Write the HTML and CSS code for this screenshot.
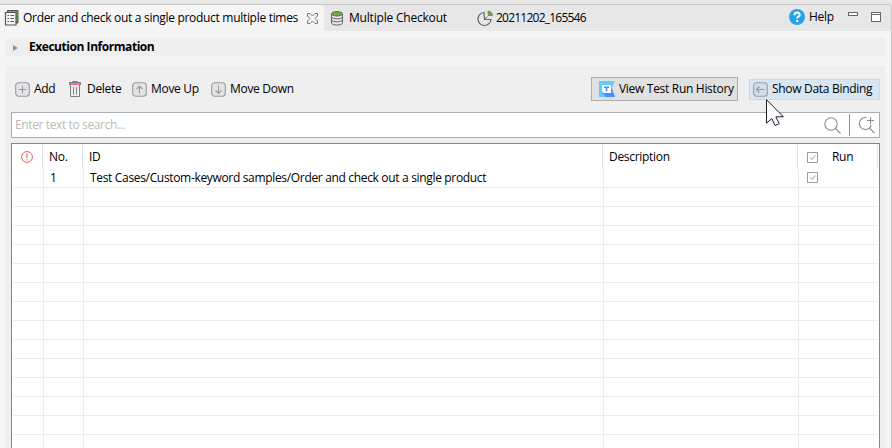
FILE: index.html
```html
<!DOCTYPE html>
<html lang="en">
<head>
<meta charset="utf-8">
<title>Test Suite Collection</title>
<link rel="stylesheet" href="styles.css">
</head>
<body>
<div class="editor">
  <header class="tabs">
    <div class="tab active">
      <svg class="ic" width="16" height="18" viewBox="0 0 16 18" fill="none"><path d="M3.500 3V1.500h10.500v12.500H12" fill="#6cae45" stroke="#555"/><path d="M1.500 3.500h10.500v12.500h-10.500z" fill="#f5f5f5" stroke="#555" stroke-width="1.200"/><path d="M3.500 6.500h1.500m1.500 0h3.500M3.500 9.500h1.500m1.500 0h3.500M3.500 12.500h1.500m1.500 0h3.500" stroke="#555"/></svg>
      <span class="t t-order">Order and check out a single product multiple times</span>
      <svg class="close" width="11" height="11" viewBox="0 0 11 11" fill="none" stroke="#777"><path d="M.5.5h2.500L5.500 3 8 .5h2.500V3L8 5.500 10.500 8v2.500H8L5.500 8 3 10.500H.5V8L3 5.500.5 3z"/></svg>
    </div>
    <div class="tab second">
      <svg class="ic" width="12" height="15" viewBox="0 0 12 15" fill="none" stroke="#666"><path d="M.5 3v8.800c0 3 11 3 11 0V3"/><path d="M.5 5.800c0 2.700 11 2.700 11 0M.5 8.800c0 2.700 11 2.700 11 0"/><ellipse cx="6" cy="2.800" rx="5.500" ry="2.200" fill="#6cae45"/></svg>
      <span class="t t-multi">Multiple Checkout</span>
    </div>
    <div class="tab third">
      <svg class="ic" width="16" height="17" viewBox="0 0 16 17" fill="none"><path d="M7 2.500A6.500 6.500 0 1 0 14 9.500H7.500z" stroke="#666" stroke-width="1.200"/><path d="M7.500 9.500l3-3" stroke="#666"/><path d="M11 1v4.500h4.500A4.500 4.500 0 0 0 11 1z" fill="#6cae45" stroke="#667" stroke-width=".6"/></svg>
      <span class="t t-date">20211202_165546</span>
    </div>
    <div class="tools">
      <svg width="16" height="16" viewBox="0 0 16 16" fill="none"><circle cx="8" cy="8" r="8" fill="#25a3eb"/><path d="M5.500 6.200C5.500 2.500 10.700 2.800 10.700 5.700 10.700 7.600 8.200 7.500 8.200 9.500" stroke="#fff" stroke-width="2"/><path d="M7.100 11h2.200v2H7.100z" fill="#fff"/></svg>
      <span class="t t-help">Help</span>
      <i class="min"></i><i class="max"></i>
    </div>
  </header>

  <section class="execution"><svg width="5" height="6" viewBox="0 0 5 6"><path d="M0 0l5 3-5 3z" fill="#8c9096"/></svg><b class="t t-exec">Execution Information</b></section>

  <main class="panel">
    <div class="toolbar">
      <svg class="square" viewBox="0 0 15 15"><rect x=".7" y=".7" width="13.600" height="13.600" rx="3"/><path d="M3.500 7.500h8M7.500 3.500v8"/></svg>
      <span class="t t-add">Add</span>
      <svg class="bin" width="12" height="16" viewBox="0 0 12 16" fill="none" stroke="#7d8088"><path d="M1.500 4v11.500h9V4M4.500 6v7.500M7.500 6v7.500"/><path d="M3.500 1.500v-1h5v1"/><path d="M1 2h10v2H1z" fill="#fa7482" stroke="none"/><path d="M0 1.500h12M.5 1.500v2.500M11.500 1.500v2.500"/></svg>
      <span class="t t-del">Delete</span>
      <svg class="square" viewBox="0 0 15 15"><rect x=".7" y=".7" width="13.600" height="13.600" rx="3"/><path d="M7.500 11.500V4M4.500 7l3-3 3 3"/></svg>
      <span class="t t-up">Move Up</span>
      <svg class="square" viewBox="0 0 15 15"><rect x=".7" y=".7" width="13.600" height="13.600" rx="3"/><path d="M7.500 3.500v8M4.500 8.500l3 3 3-3"/></svg>
      <span class="t t-down">Move Down</span>
      <button class="history">
        <svg width="16" height="16" viewBox="0 0 16 16"><path d="M0 0h16l-3 6 3 10H0z" fill="#5dcbff"/><path d="M4 12h8V7l4 9H7z" fill="#4b8dff"/><path d="M3 4h9v8H5L3 10z" fill="#fff"/><path d="M5 5.500h5v1.500H8.300v3.500H6.700V7H5z" fill="#4b8dff"/></svg>
        <span class="t t-hist">View Test Run History</span>
      </button>
      <button class="binding">
        <svg class="square" viewBox="0 0 15 15"><rect x=".7" y=".7" width="13.600" height="13.600" rx="3"/><path d="M11.500 7.500h-8M6.500 4.500l-3 3 3 3"/></svg>
        <span class="t t-bind">Show Data Binding</span>
        <svg class="pointer" width="19" height="29" viewBox="0 0 19 29"><path d="M.5.7v23.500l5.300-4.700 3.300 7 4.100-1.900-3.300-6.800h7.500z" fill="#fff" stroke="#191b28"/></svg>
      </button>
    </div>

    <div class="search">
      <span class="t t-search">Enter text to search...</span>
      <svg class="lens" width="17" height="17" viewBox="0 0 17 17" fill="none" stroke="#8b8d93" stroke-width="1.100"><circle cx="7" cy="7" r="6.200"/><path d="M11.500 11.500l5 5"/></svg>
      <i class="divider"></i>
      <svg width="18" height="18" viewBox="0 0 18 18" fill="none" stroke="#8b8d93" stroke-width="1.100"><path d="M8.500 1.600A6 6 0 1 0 13.200 9M11.300 12l5 5M12.500 1v7M9 4.500h7"/></svg>
    </div>

    <div class="table">
      <div class="row head">
        <div><svg width="12" height="12" viewBox="0 0 12 12" fill="none" stroke="#e2605e"><circle cx="6" cy="6" r="5.400"/><path d="M6 2.500v4.500M6 8.200v1.300" stroke-width="1.100"/></svg></div>
        <div><span class="t t-no">No.</span></div>
        <div><span class="t t-id">ID</span></div>
        <div><span class="t t-desc">Description</span></div>
        <div class="runcell"><svg class="check" viewBox="0 0 11 11"><path d="M.5.5h10v10H.5zM3 5.500l2 2L8.500 3.500"/></svg><span class="t t-run">Run</span></div>
      </div>
      <div class="row first"><div></div><div><span class="t t-one">1</span></div><div><span class="t t-path">Test Cases/Custom-keyword samples/Order and check out a single product</span></div><div></div><div class="runcell"><svg class="check" viewBox="0 0 11 11"><path d="M.5.5h10v10H.5zM3 5.500l2 2L8.500 3.500"/></svg></div></div>
      <div class="row"><div></div><div></div><div></div><div></div><div></div></div>
      <div class="row"><div></div><div></div><div></div><div></div><div></div></div>
      <div class="row"><div></div><div></div><div></div><div></div><div></div></div>
      <div class="row"><div></div><div></div><div></div><div></div><div></div></div>
      <div class="row"><div></div><div></div><div></div><div></div><div></div></div>
      <div class="row"><div></div><div></div><div></div><div></div><div></div></div>
      <div class="row"><div></div><div></div><div></div><div></div><div></div></div>
      <div class="row"><div></div><div></div><div></div><div></div><div></div></div>
      <div class="row"><div></div><div></div><div></div><div></div><div></div></div>
      <div class="row"><div></div><div></div><div></div><div></div><div></div></div>
      <div class="row"><div></div><div></div><div></div><div></div><div></div></div>
      <div class="row"><div></div><div></div><div></div><div></div><div></div></div>
      <div class="row"><div></div><div></div><div></div><div></div><div></div></div>
      <div class="row"><div></div><div></div><div></div><div></div><div></div></div>
    </div>
  </main>
</div>
</body>
</html>
```
FILE: styles.css
```css
* { box-sizing: border-box; }
body {
  margin: 0;
  padding-top: 4px;
  height: 448px;
  overflow: hidden;
  background: #e7e7e7;
  color: #000;
  font: 12px/16px "Open Sans", "Noto Sans", sans-serif;
}
svg, i { display: block; flex: none; }
.t { display: block; flex: none; white-space: nowrap; letter-spacing: -0.3px; }
.t-multi { letter-spacing: -0.2px; }
.t-date { letter-spacing: -0.77px; }
.t-exec { letter-spacing: -0.45px; }
.t-search { letter-spacing: -0.38px; }
.t-path { letter-spacing: -0.33px; }
.editor {
  height: 444px;
  overflow: hidden;
  background: #f5f5f5;
  border: 1px solid #c8c8c8;
  border-width: 1px 1px 0 0;
  border-radius: 0 4px 0 0;
}
.tabs { display: flex; height: 26px; background: #e7e7e7; }
.tab { display: flex; align-items: center; }
.tab .ic { margin-right: 4px; }
.active { width: 324px; padding-left: 4px; background: #f5f5f5; border-radius: 0 3px 0 0; }
.tab.active .ic { margin-right: 3px; }
.active .t { width: 276px; }
.close { margin-left: 8px; }
.second { width: 153px; padding-left: 7px; }
.tab.second .ic { margin-right: 6px; }
.tab.third .ic { margin-right: 3px; }
.tools { display: flex; align-items: center; width: 102px; margin-left: auto; }
.tools .t { width: 26px; margin: -2px 0 0 4px; }
.tools svg { margin-top: -2px; }
.min { width: 10px; height: 4px; border: 1px solid #666; margin: -8px 0 0 13px; background: #fff; }
.max { width: 10px; height: 10px; border: 1px solid #666; margin: -2px 0 0 13px; background: linear-gradient(#fff 1px, #666 1px, #666 2px, #fff 2px); }
.execution {
  display: flex;
  align-items: center;
  height: 18px;
  margin: 7px 6px 10px;
  padding-left: 7px;
  background: #efefef;
}
.execution .t { margin-left: 11px; }
.execution svg { margin-top: 2px; }
.panel { height: 390px; margin: 0 6px; padding: 11px 5px 0; background: #efefef; }
.toolbar { display: flex; align-items: center; height: 24px; padding-left: 4px; }
.square { width: 15px; height: 15px; fill: #e4e4e6; stroke: #9a9ba1; stroke-width: 1.1; }
.square path { fill: none; }
.toolbar > .t { margin-left: 4px; }
.t-add { width: 22px; }
.bin { margin-left: 13px; }
.toolbar > .t-del { width: 34px; margin-left: 6px; }
.toolbar > .t-del + .square { margin-left: 11px; }
.t-up { width: 48px; }
.t-up + .square { margin-left: 12px; }
button { display: flex; align-items: center; padding: 0; border: 1px solid #adadad; background: #e1e1e1; font: inherit; color: inherit; }
.history { width: 147px; height: 24px; margin-left: auto; padding-left: 7px; }
.history .t { margin-left: 4px; }
.binding { position: relative; width: 131px; height: 21px; margin-left: 11px; padding-left: 3px; background: #d8e6f2; border-color: #c0dcf3; }
.binding .square { fill: #d3dde9; }
.binding .t { margin-left: 4px; }
.pointer { position: absolute; left: 16px; top: 19px; z-index: 2; }
.search { display: flex; align-items: center; height: 26px; margin-top: 11px; padding-left: 3px; border: 1px solid #abadb3; background: #fff; color: #bababa; }
.lens { margin-left: auto; }
.divider { width: 1px; height: 22px; margin: 0 8px; background: #8b8d93; }
.search svg:last-child { margin-right: 3px; }
.table { height: 320px; margin-top: 5px; padding: 1px 0 0 1px; border: 1px solid #828790; background: #fff; }
.row { display: grid; grid-template-columns: 31px 40px 520px 195px 1fr; height: 19px; margin-right: 1px; border-bottom: 1px solid #ededed; }
.row > div { display: flex; align-items: center; border-right: 1px solid #ededed; }
.row > div:last-child { border-right: 0; }
.head { grid-template-columns: 30px 40px 520px 195px 1fr; height: 24px; border: 0; }
.head > div { padding-left: 6px; border-color: #e2e2e2; }
.head > div:first-child { padding-left: 8px; }
.row.head > div:last-child { border-right: 1px solid #e2e2e2; }
.row > .runcell { padding-left: 8px; }
.row.head > .runcell { padding-left: 9px; }
.first .check { margin-top: -2px; }
.check { width: 11px; height: 11px; fill: none; stroke: #999ba0; }
.t-run { margin-left: 14px; }
.t-one { margin-left: 6px; }
.t-path { margin-left: 6px; }
```
